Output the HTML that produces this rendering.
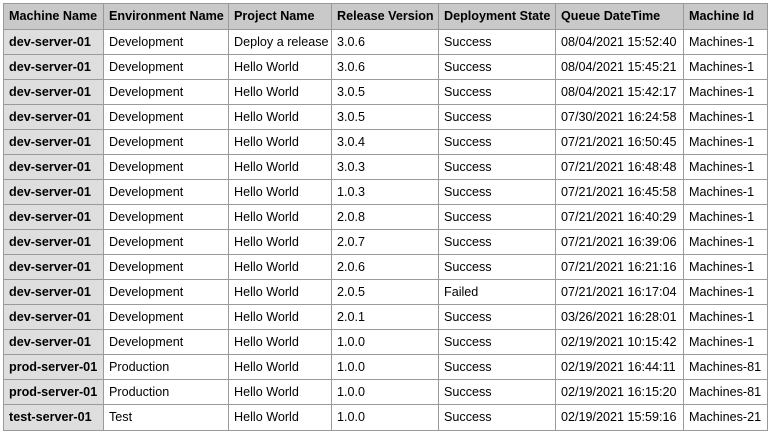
<!DOCTYPE html>
<html><head><style>
body{margin:0;background:#fff;width:770px;height:434px;overflow:hidden;font-family:"Liberation Sans",Arial,sans-serif;font-size:12.6px;color:#000}
table{position:absolute;left:3px;top:3px;border-collapse:collapse;table-layout:fixed;width:764px}
td,th{border:1px solid #9a9a9a;padding:0 6px 0 5px;white-space:nowrap;overflow:hidden;text-align:left}
th{background:#c9c9c9;font-weight:bold;height:24.5px}
td{height:24.07px}
td:first-child{background:#dedede;font-weight:bold}
</style></head><body>
<table>
<colgroup><col style="width:100px"><col style="width:125px"><col style="width:103px"><col style="width:107px"><col style="width:117px"><col style="width:128px"><col style="width:84px"></colgroup>
<tr><th>Machine Name</th><th>Environment Name</th><th>Project Name</th><th>Release Version</th><th>Deployment State</th><th>Queue DateTime</th><th>Machine Id</th></tr>
<tr><td>dev-server-01</td><td>Development</td><td>Deploy a release</td><td>3.0.6</td><td>Success</td><td>08/04/2021 15:52:40</td><td>Machines-1</td></tr>
<tr><td>dev-server-01</td><td>Development</td><td>Hello World</td><td>3.0.6</td><td>Success</td><td>08/04/2021 15:45:21</td><td>Machines-1</td></tr>
<tr><td>dev-server-01</td><td>Development</td><td>Hello World</td><td>3.0.5</td><td>Success</td><td>08/04/2021 15:42:17</td><td>Machines-1</td></tr>
<tr><td>dev-server-01</td><td>Development</td><td>Hello World</td><td>3.0.5</td><td>Success</td><td>07/30/2021 16:24:58</td><td>Machines-1</td></tr>
<tr><td>dev-server-01</td><td>Development</td><td>Hello World</td><td>3.0.4</td><td>Success</td><td>07/21/2021 16:50:45</td><td>Machines-1</td></tr>
<tr><td>dev-server-01</td><td>Development</td><td>Hello World</td><td>3.0.3</td><td>Success</td><td>07/21/2021 16:48:48</td><td>Machines-1</td></tr>
<tr><td>dev-server-01</td><td>Development</td><td>Hello World</td><td>1.0.3</td><td>Success</td><td>07/21/2021 16:45:58</td><td>Machines-1</td></tr>
<tr><td>dev-server-01</td><td>Development</td><td>Hello World</td><td>2.0.8</td><td>Success</td><td>07/21/2021 16:40:29</td><td>Machines-1</td></tr>
<tr><td>dev-server-01</td><td>Development</td><td>Hello World</td><td>2.0.7</td><td>Success</td><td>07/21/2021 16:39:06</td><td>Machines-1</td></tr>
<tr><td>dev-server-01</td><td>Development</td><td>Hello World</td><td>2.0.6</td><td>Success</td><td>07/21/2021 16:21:16</td><td>Machines-1</td></tr>
<tr><td>dev-server-01</td><td>Development</td><td>Hello World</td><td>2.0.5</td><td>Failed</td><td>07/21/2021 16:17:04</td><td>Machines-1</td></tr>
<tr><td>dev-server-01</td><td>Development</td><td>Hello World</td><td>2.0.1</td><td>Success</td><td>03/26/2021 16:28:01</td><td>Machines-1</td></tr>
<tr><td>dev-server-01</td><td>Development</td><td>Hello World</td><td>1.0.0</td><td>Success</td><td>02/19/2021 10:15:42</td><td>Machines-1</td></tr>
<tr><td>prod-server-01</td><td>Production</td><td>Hello World</td><td>1.0.0</td><td>Success</td><td>02/19/2021 16:44:11</td><td>Machines-81</td></tr>
<tr><td>prod-server-01</td><td>Production</td><td>Hello World</td><td>1.0.0</td><td>Success</td><td>02/19/2021 16:15:20</td><td>Machines-81</td></tr>
<tr><td>test-server-01</td><td>Test</td><td>Hello World</td><td>1.0.0</td><td>Success</td><td>02/19/2021 15:59:16</td><td>Machines-21</td></tr>
</table>
</body></html>
